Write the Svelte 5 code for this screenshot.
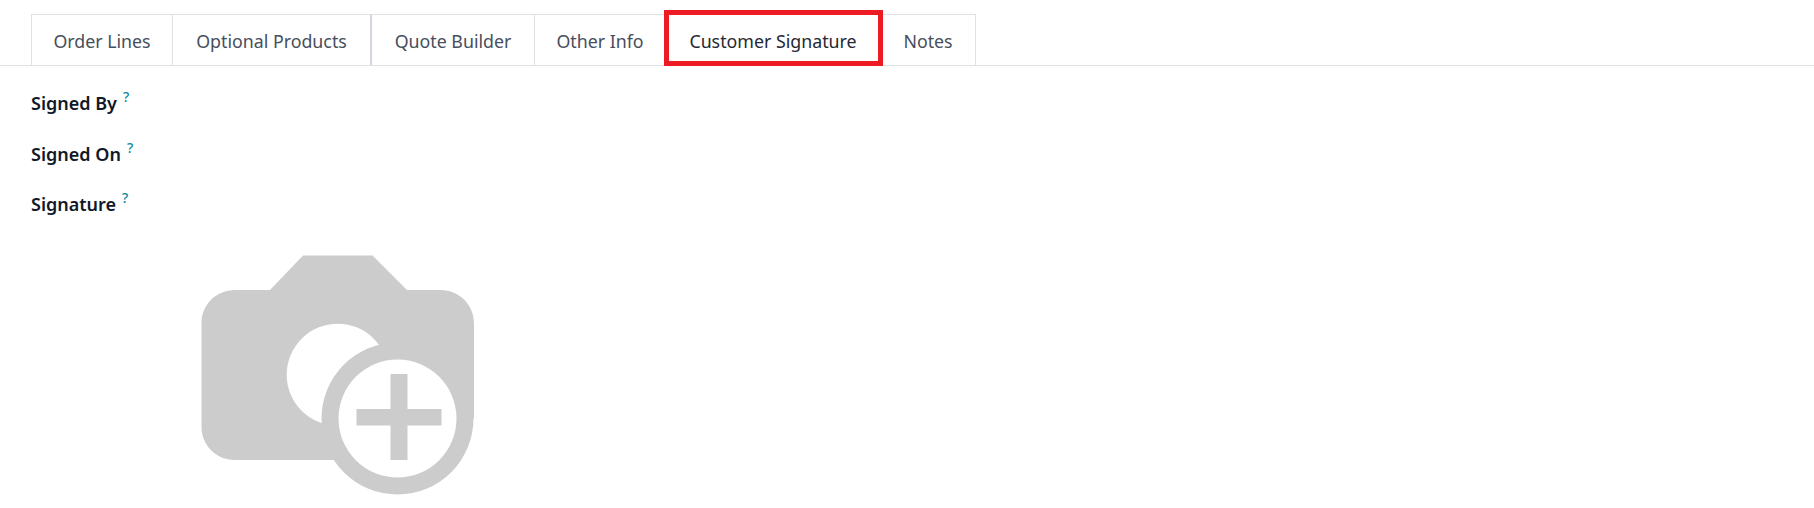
<script>
  const tabs = [
    { label: 'Order Lines' },
    { label: 'Optional Products' },
    { label: 'Quote Builder' },
    { label: 'Other Info' },
    { label: 'Customer Signature', active: true },
    { label: 'Notes' }
  ];
  const fields = ['Signed By', 'Signed On', 'Signature'];
</script>

<div class="page">
  <div class="tabs">
    {#each tabs as t}
      <div class="tab" class:active={t.active}>
        {t.label}
        {#if t.active}<span class="mark"></span>{/if}
      </div>
    {/each}
  </div>

  <div class="fields">
    {#each fields as f}
      <div class="field">{f}<sup>?</sup></div>
    {/each}
  </div>

  <svg class="camera" width="274" height="242" viewBox="201 254 274 242" aria-label="Add signature">
    <path fill="#cccccc" d="M303 254.500H372.500L407 289H441C459 289 474 304 474 322V417.500H397.500L333.500 459H235C216 459 201.500 444 201.500 426V322C201.500 304 216 289 235 289H270Z"/>
    <circle cx="337.700" cy="373.700" r="51" fill="#ffffff"/>
    <circle cx="397.500" cy="417.500" r="76" fill="#cccccc"/>
    <circle cx="397.500" cy="417.500" r="59" fill="#ffffff"/>
    <rect x="356.500" y="408" width="85" height="16.500" fill="#cccccc"/>
    <rect x="390.500" y="373" width="17" height="86" fill="#cccccc"/>
  </svg>
</div>

<style>
  :global(body) {
    margin: 0;
    background: #fff;
  }
  .page {
    height: 508px;
    overflow: hidden;
    font-family: "Noto Sans", "Open Sans", sans-serif;
    font-size: 17.8px;
    color: #212529;
  }
  .tabs {
    display: grid;
    grid-template-columns: 142px 199px 163px 131px 215px 95px;
    justify-content: start;
    height: 51px;
    padding: 14px 0 0 31px;
    border-bottom: 1px solid #dee2e6;
  }
  .tab {
    position: relative;
    display: flex;
    align-items: center;
    justify-content: center;
    padding-top: 1px;
    border: 1px solid #dee2e6;
    border-bottom: 0;
    border-left-width: 0;
    color: #474e5c;
    white-space: nowrap;
  }
  .tab:first-child {
    border-left-width: 1px;
  }
  .tab:nth-child(2) {
    border-right-width: 2px;
    border-right-color: #d4d4dc;
  }
  .tab.active {
    color: #1f2933;
    z-index: 1;
  }
  .mark {
    position: absolute;
    left: -2px;
    right: -3px;
    top: -5px;
    bottom: -1px;
    border: 5px solid #ed1c24;
  }
  .fields {
    padding: 24px 0 0 31px;
  }
  .field {
    height: 50.500px;
    line-height: 26px;
    font-size: 18px;
    font-weight: 600;
    color: #111827;
  }
  sup {
    font-size: 14px;
    font-weight: 500;
    color: #0d8aa5;
    margin-left: 6px;
    vertical-align: 8px;
    line-height: 0;
  }
  .camera {
    display: block;
    margin: 13px 0 0 201px;
  }
</style>
